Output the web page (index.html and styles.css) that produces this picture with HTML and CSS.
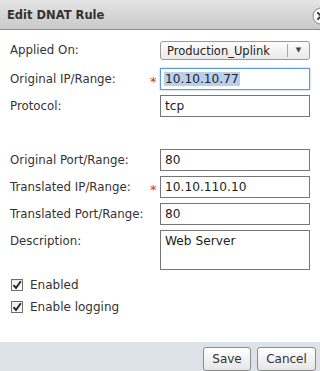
FILE: index.html
```html
<!DOCTYPE html>
<html lang="en">
<head>
  <meta charset="UTF-8" />
  <meta name="viewport" content="width=device-width, initial-scale=1.0" />
  <title>Edit DNAT Rule</title>
  <link rel="stylesheet" href="styles.css">
</head>
<body>
  <div class="dialog">
    <div class="titlebar">
      <span class="title">Edit DNAT Rule</span>
      <span class="close">
        <svg width="18" height="18" viewBox="0 0 18 18">
          <circle cx="9" cy="9" r="8" fill="#fff" stroke="#9a9a9a" stroke-width="1.2" />
          <path d="M6 6 L12 12 M12 6 L6 12" stroke="#3c4a50" stroke-width="2.2" stroke-linecap="round" />
        </svg>
      </span>
    </div>

    <div class="content">
      <div class="form">
        <label class="lbl lbl-mid">Applied On:</label>
        <span class="req"></span>
        <div class="select">
          <span class="select-value">Production_Uplink</span>
          <span class="select-arrow">&#9660;</span>
        </div>

        <label class="lbl">Original IP/Range:</label>
        <span class="req">&#42;</span>
        <div class="field focused"><span class="selected">10.10.10.77</span></div>

        <label class="lbl">Protocol:</label>
        <span class="req"></span>
        <div class="field">tcp</div>

        <div class="spacer"></div>

        <label class="lbl">Original Port/Range:</label>
        <span class="req"></span>
        <div class="field">80</div>

        <label class="lbl">Translated IP/Range:</label>
        <span class="req">&#42;</span>
        <div class="field">10.10.110.10</div>

        <label class="lbl">Translated Port/Range:</label>
        <span class="req"></span>
        <div class="field">80</div>

        <label class="lbl">Description:</label>
        <span class="req"></span>
        <div class="field textarea">Web Server</div>
      </div>

      <div class="checks">
        <div class="check-row">
          <span class="checkbox">
            <svg width="10" height="10" viewBox="0 0 10 10">
              <path d="M1.5 5.2 L4 8 L8.8 1.2" fill="none" stroke="#222" stroke-width="1.9" />
            </svg>
          </span>
          <span>Enabled</span>
        </div>
        <div class="check-row">
          <span class="checkbox">
            <svg width="10" height="10" viewBox="0 0 10 10">
              <path d="M1.5 5.2 L4 8 L8.8 1.2" fill="none" stroke="#222" stroke-width="1.9" />
            </svg>
          </span>
          <span>Enable logging</span>
        </div>
      </div>
    </div>

    <div class="footer">
      <button class="btn btn-save">Save</button>
      <button class="btn btn-cancel">Cancel</button>
    </div>
  </div>
</body>
</html>
```

FILE: styles.css
```css
body {
  margin: 0;
  font-family: 'DejaVu Sans', Verdana, sans-serif;
  font-size: 11.8px;
  color: #333;
  background-color: #fff;
}

.dialog {
  display: flex;
  flex-direction: column;
  height: 100vh;
  overflow: hidden;
}

.titlebar {
  display: flex;
  align-items: center;
  justify-content: space-between;
  height: 29px;
  padding-left: 7px;
  background: linear-gradient(to bottom, #e4e4e4, #c9c9c9);
  border-bottom: 1px solid #8e8e8e;
}

.title {
  font-weight: bold;
  font-size: 11.5px;
  color: #333;
}

.close {
  display: flex;
  margin-right: -10px;
  margin-top: 2px;
}

.content {
  flex: 1;
  padding: 11px 0 0 10px;
}

.form {
  display: grid;
  grid-template-columns: 140px 10px 150px;
  row-gap: 5px;
  grid-auto-rows: 22px;
}

.spacer {
  grid-column: 1 / -1;
}

.lbl {
  padding-top: 4px;
}

.lbl-mid {
  padding-top: 2px;
}

.req {
  color: #d42a2a;
  font-size: 13px;
  line-height: 22px;
  padding-top: 3px;
}

.select {
  display: flex;
  align-items: center;
  height: 17px;
  border: 1px solid #9a9a9a;
  border-radius: 3px;
  background: linear-gradient(to bottom, #fdfdfd, #e9e9e9);
  color: #222;
  font-size: 11.5px;
}

.select-value {
  flex: 1;
  padding-left: 6px;
}

.select-arrow {
  width: 21px;
  text-align: center;
  font-size: 7px;
  color: #444;
  border-left: 1px solid #a8a8a8;
  line-height: 13px;
}

.field {
  box-sizing: border-box;
  height: 22px;
  padding: 3px 4px;
  border: 1px solid #767676;
  background-color: #fff;
  color: #222;
  font-size: 12.2px;
  line-height: 15px;
}

.field.focused {
  border: 1px solid #5d9ad6;
  box-shadow: 0 0 2px #8fc0ef;
  padding-left: 3px;
}

.selected {
  background-color: #b8cfee;
  padding: 0 1px;
}

.field.textarea {
  grid-row: span 2;
  height: 40px;
  padding-top: 3px;
}

.checks {
  display: flex;
  flex-direction: column;
  gap: 8px;
  margin-top: -1px;
  padding-left: 1px;
  font-size: 12px;
  color: #333;
}

.check-row {
  display: flex;
  align-items: center;
  gap: 7px;
  height: 14px;
}

.checkbox {
  display: flex;
  align-items: center;
  justify-content: center;
  box-sizing: border-box;
  width: 12px;
  height: 12px;
  border: 1px solid #6e6e6e;
  background: linear-gradient(to bottom, #ededed, #fff);
}

.footer {
  display: flex;
  justify-content: flex-end;
  gap: 6px;
  height: 29px;
  padding: 5px 4px 0 0;
  box-sizing: border-box;
  background-color: #dde1e8;
}

.btn {
  height: 24px;
  padding: 0;
  border: 1px solid #8c8c8c;
  border-radius: 3px;
  background: linear-gradient(to bottom, #ffffff, #e6e6e6);
  font-family: 'DejaVu Sans', Verdana, sans-serif;
  font-size: 12px;
  color: #333;
}

.btn-save {
  width: 48px;
}

.btn-cancel {
  width: 59px;
}
```
